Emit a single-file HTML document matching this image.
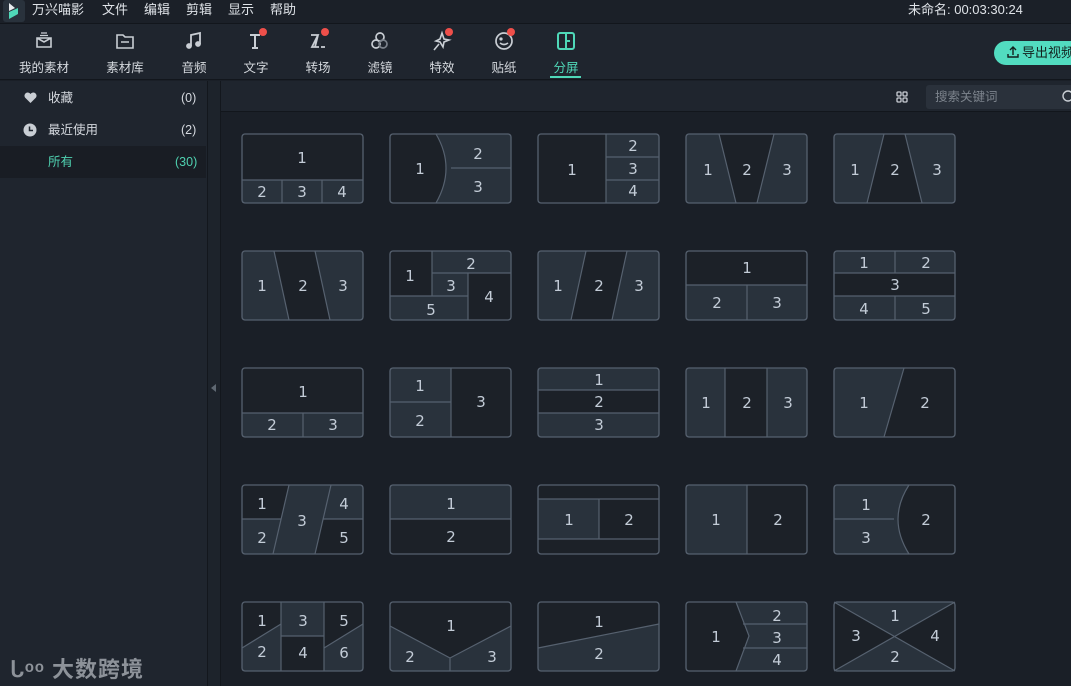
<!DOCTYPE html>
<html><head><meta charset="utf-8"><style>
*{margin:0;padding:0;box-sizing:border-box}
body{width:1071px;height:686px;overflow:hidden;background:#1a1f27;font-family:"Liberation Sans","Noto Sans CJK SC",sans-serif;color:#d4d8de;position:relative}
.abs{position:absolute}
#menu{left:0;top:0;width:1071px;height:24px;background:#1b2028;border-bottom:1px solid #12161c}
#menu span{position:absolute;top:0;line-height:20px;font-size:13px;color:#dfe3e8}
#tool{left:0;top:24px;width:1071px;height:56px;background:#1f252e;border-bottom:1px solid #12161c}
.ti{position:absolute;top:0;width:70px;text-align:center}
.ti svg{position:absolute;left:24px;top:6px}
.ti .lb{position:absolute;top:33px;left:0;width:70px;font-size:12.5px;color:#d5d9de}
.dot{position:absolute;width:8px;height:8px;border-radius:50%;background:#ee4f4a}
#side{left:0;top:81px;width:207px;height:605px;background:#1f252e}
#side .row{position:absolute;left:0;width:206px;height:31px;font-size:12.5px;line-height:31px}
#side .row span{top:0}
#gbar{left:221px;top:81px;width:850px;height:31px;background:#1f252e;border-bottom:1px solid #12161c}
</style></head><body>
<div id="menu" class="abs">
 <div class="abs" style="left:3px;top:0;width:22px;height:22px;background:#29323c;border-radius:3px"></div>
 <svg class="abs" style="left:6px;top:2px" width="16" height="18" viewBox="0 0 16 18"><path d="M3 1 L9 6 L3 9Z" fill="#e8ecef"/><path d="M3 10 L12 6 L12 12 L3 17Z" fill="#4fd8b8"/></svg>
 <span style="left:32px">万兴喵影</span><span style="left:102px">文件</span><span style="left:144px">编辑</span><span style="left:186px">剪辑</span><span style="left:228px">显示</span><span style="left:270px">帮助</span>
 <span style="left:908px">未命名: 00:03:30:24</span>
</div>
<div id="tool" class="abs">
 <div class="ti" style="left:9px"><svg width="22" height="22" viewBox="0 0 22 22" fill="none" stroke="#c9ced4" stroke-width="1.6"><path d="M4 8 H18 V17 H4Z M4 8 L11 12 L18 8"/><path d="M8 3 H14 M7 5.5 H15" stroke-width="1.2"/></svg><div class="lb">我的素材</div></div>
 <div class="ti" style="left:90px"><svg width="22" height="22" viewBox="0 0 22 22" fill="none" stroke="#c9ced4" stroke-width="1.6"><path d="M3 5 H9 L11 7 H19 V18 H3Z M7 12 H15"/></svg><div class="lb">素材库</div></div>
 <div class="ti" style="left:159px"><svg width="22" height="22" viewBox="0 0 22 22" fill="none" stroke="#c9ced4" stroke-width="1.8"><path d="M8 16 V5 L17 3 V14"/><circle cx="6" cy="16" r="2" fill="#c9ced4"/><circle cx="15" cy="14" r="2" fill="#c9ced4"/></svg><div class="lb">音频</div></div>
 <div class="ti" style="left:221px"><svg width="22" height="22" viewBox="0 0 22 22" fill="none" stroke="#c9ced4" stroke-width="2"><path d="M5 5 H15 M10 5 V18 M7 18 H13"/></svg><div class="dot" style="left:38px;top:4px"></div><div class="lb">文字</div></div>
 <div class="ti" style="left:283px"><svg width="22" height="22" viewBox="0 0 22 22" fill="none" stroke="#c9ced4" stroke-width="1.8"><path d="M4 5 H11 L5 17 H12 M11 5 L8 17 M14 17 H18"/></svg><div class="dot" style="left:38px;top:4px"></div><div class="lb">转场</div></div>
 <div class="ti" style="left:345px"><svg width="22" height="22" viewBox="0 0 22 22" fill="none" stroke="#c9ced4" stroke-width="1.7"><circle cx="11" cy="7" r="4"/><circle cx="7" cy="14" r="4"/><circle cx="14" cy="14" r="4" stroke="#7b828b"/></svg><div class="lb">滤镜</div></div>
 <div class="ti" style="left:407px"><svg width="22" height="22" viewBox="0 0 22 22" fill="none" stroke="#c9ced4" stroke-width="1.6"><path d="M11 3 L13 9 L18 10 L13 12 L12 17 L9 12 L5 11 L9 9Z M8 14 L3 20"/></svg><div class="dot" style="left:38px;top:4px"></div><div class="lb">特效</div></div>
 <div class="ti" style="left:469px"><svg width="22" height="22" viewBox="0 0 22 22" fill="none" stroke="#c9ced4" stroke-width="1.7"><circle cx="11" cy="11" r="8"/><path d="M7 13 Q11 16 15 13"/><circle cx="8" cy="9" r=".8" fill="#c9ced4"/></svg><div class="dot" style="left:38px;top:4px"></div><div class="lb">贴纸</div></div>
 <div class="ti" style="left:531px"><svg width="22" height="22" viewBox="0 0 22 22" fill="none" stroke="#4fd8b8" stroke-width="2"><rect x="3" y="3" width="16" height="16" rx="2"/><path d="M11 3 V19 M11 11 H15"/></svg><div class="lb" style="color:#4fd8b8">分屏</div></div>
 <div class="abs" style="left:550px;top:52px;width:31px;height:2px;background:#4fd8b8"></div>
 <div class="abs" style="left:994px;top:17px;width:90px;height:24px;border-radius:12px;background:#52dcc0;color:#13201d;font-size:13px;line-height:24px;padding-left:28px">导出视频</div>
 <svg class="abs" style="left:1006px;top:21px" width="14" height="14" viewBox="0 0 14 14" fill="none" stroke="#13201d" stroke-width="1.4"><path d="M7 10 V2 M4 5 L7 2 L10 5 M2 9 V12 H12 V9"/></svg>
</div>
<div id="side" class="abs">
 <div class="row" style="top:2px"><svg class="abs" style="left:24px;top:9px" width="13" height="12" viewBox="0 0 13 12"><path d="M6.5 11 L1 5.5 A3 3 0 0 1 6.5 2 A3 3 0 0 1 12 5.5Z" fill="#c9ced4"/></svg><span class="abs" style="left:48px">收藏</span><span class="abs" style="left:181px">(0)</span></div>
 <div class="row" style="top:34px"><svg class="abs" style="left:23px;top:8px" width="14" height="14" viewBox="0 0 14 14"><circle cx="7" cy="7" r="6.5" fill="#c9ced4"/><path d="M6.5 3.5 V7.5 H10" stroke="#1f252e" stroke-width="1.5" fill="none"/></svg><span class="abs" style="left:48px">最近使用</span><span class="abs" style="left:181px">(2)</span></div>
 <div class="row" style="top:65px;background:#191d24;height:32px;line-height:32px;color:#4fd1b0"><span class="abs" style="left:48px">所有</span><span class="abs" style="left:175px">(30)</span></div>
</div>
<div class="abs" style="left:207px;top:81px;width:1px;height:605px;background:#13171d"></div>
<div class="abs" style="left:208px;top:81px;width:13px;height:605px;background:#1d232b"></div>
<div class="abs" style="left:220px;top:81px;width:1px;height:605px;background:#13171d"></div>
<svg class="abs" style="left:211px;top:384px" width="6" height="8"><path d="M5 0 V8 L0 4Z" fill="#5f6872"/></svg>
<div id="gbar" class="abs">
 <svg class="abs" style="left:675px;top:10px" width="12" height="12" fill="none" stroke="#c9ced4" stroke-width="1.3"><rect x="1" y="1" width="4" height="4" rx="1"/><rect x="7" y="1" width="4" height="4" rx="1"/><rect x="1" y="7" width="4" height="4" rx="1"/><rect x="7" y="7" width="4" height="4" rx="1"/></svg>
 <div class="abs" style="left:705px;top:4px;width:150px;height:24px;background:#2a313b;border-radius:3px;color:#7d848d;font-size:12.5px;line-height:24px;padding-left:9px">搜索关键词</div>
 <svg class="abs" style="left:841px;top:9px" width="12" height="12" fill="none" stroke="#c9ced4" stroke-width="1.4"><circle cx="6" cy="6" r="5"/></svg>
</div>
<div class="abs" style="left:10px;top:652px;font-size:22px;font-weight:bold;color:#8d9299;letter-spacing:1px">ᒐᵒᵒ 大数跨境</div>

<svg class="abs" style="left:0;top:0" width="1071" height="686" font-family="DejaVu Sans, Liberation Sans, sans-serif" font-size="15" fill="#c3ccd7" text-anchor="middle">
<defs><style>.D{fill:#1c2128}.L{fill:#29323c}.s{stroke:#56616f;stroke-width:1.2;fill:none}.o{fill:none;stroke:#56616f;stroke-width:1.3}text{fill:#c3ccd7}</style></defs>
<g transform="translate(242,134)"><rect class="D" width="121" height="69" rx="3"/><rect class="L" y="46" width="121" height="23"/><path class="s" d="M0 46H121M40 46V69M80 46V69"/><rect class="o" width="121" height="69" rx="3"/><text x="60" y="29">1</text><text x="20" y="63">2</text><text x="60" y="63">3</text><text x="100" y="63">4</text></g>
<g transform="translate(390,134)"><rect class="L" width="121" height="69" rx="3"/><path class="D" d="M0 0H46Q66 34 46 69H0Z"/><path class="s" d="M46 0Q66 34 46 69M61 34H121"/><rect class="o" width="121" height="69" rx="3"/><text x="30" y="40">1</text><text x="88" y="25">2</text><text x="88" y="58">3</text></g>
<g transform="translate(538,134)"><rect class="L" width="121" height="69" rx="3"/><rect class="D" width="68" height="69"/><path class="s" d="M68 0V69M68 23H121M68 46H121"/><rect class="o" width="121" height="69" rx="3"/><text x="34" y="41">1</text><text x="95" y="17">2</text><text x="95" y="40">3</text><text x="95" y="62">4</text></g>
<g transform="translate(686,134)"><rect class="L" width="121" height="69" rx="3"/><path class="D" d="M33 0H88L71 69H50Z"/><path class="s" d="M33 0L50 69M88 0L71 69"/><rect class="o" width="121" height="69" rx="3"/><text x="22" y="41">1</text><text x="61" y="41">2</text><text x="101" y="41">3</text></g>
<g transform="translate(834,134)"><rect class="L" width="121" height="69" rx="3"/><path class="D" d="M50 0H71L88 69H33Z"/><path class="s" d="M50 0L33 69M71 0L88 69"/><rect class="o" width="121" height="69" rx="3"/><text x="21" y="41">1</text><text x="61" y="41">2</text><text x="103" y="41">3</text></g>
<g transform="translate(242,251)"><rect class="L" width="121" height="69" rx="3"/><path class="D" d="M32 0H73L88 69H47Z"/><path class="s" d="M32 0L47 69M73 0L88 69"/><rect class="o" width="121" height="69" rx="3"/><text x="20" y="40">1</text><text x="61" y="40">2</text><text x="101" y="40">3</text></g>
<g transform="translate(390,251)"><rect class="L" width="121" height="69" rx="3"/><rect class="D" width="42" height="45"/><rect class="D" x="78" y="22" width="43" height="47"/><path class="s" d="M42 0V45M42 22H121M78 22V69M0 45H78"/><rect class="o" width="121" height="69" rx="3"/><text x="20" y="30">1</text><text x="81" y="18">2</text><text x="61" y="40">3</text><text x="99" y="51">4</text><text x="41" y="64">5</text></g>
<g transform="translate(538,251)"><rect class="L" width="121" height="69" rx="3"/><path class="D" d="M48 0H89L74 69H33Z"/><path class="s" d="M48 0L33 69M89 0L74 69"/><rect class="o" width="121" height="69" rx="3"/><text x="20" y="40">1</text><text x="61" y="40">2</text><text x="101" y="40">3</text></g>
<g transform="translate(686,251)"><rect class="L" width="121" height="69" rx="3"/><rect class="D" width="121" height="34"/><path class="s" d="M0 34H121M61 34V69"/><rect class="o" width="121" height="69" rx="3"/><text x="61" y="22">1</text><text x="31" y="57">2</text><text x="91" y="57">3</text></g>
<g transform="translate(834,251)"><rect class="L" width="121" height="69" rx="3"/><rect class="D" y="22" width="121" height="23"/><path class="s" d="M0 22H121M0 45H121M61 0V22M61 45V69"/><rect class="o" width="121" height="69" rx="3"/><text x="30" y="17">1</text><text x="92" y="17">2</text><text x="61" y="39">3</text><text x="30" y="63">4</text><text x="92" y="63">5</text></g>
<g transform="translate(242,368)"><rect class="D" width="121" height="69" rx="3"/><rect class="L" y="45" width="121" height="24"/><path class="s" d="M0 45H121M61 45V69"/><rect class="o" width="121" height="69" rx="3"/><text x="61" y="29">1</text><text x="30" y="62">2</text><text x="91" y="62">3</text></g>
<g transform="translate(390,368)"><rect class="D" width="121" height="69" rx="3"/><rect class="L" width="61" height="69"/><path class="s" d="M61 0V69M0 34H61"/><rect class="o" width="121" height="69" rx="3"/><text x="30" y="23">1</text><text x="30" y="58">2</text><text x="91" y="39">3</text></g>
<g transform="translate(538,368)"><rect class="L" width="121" height="69" rx="3"/><rect class="D" y="22" width="121" height="23"/><path class="s" d="M0 22H121M0 45H121"/><rect class="o" width="121" height="69" rx="3"/><text x="61" y="17">1</text><text x="61" y="39">2</text><text x="61" y="62">3</text></g>
<g transform="translate(686,368)"><rect class="L" width="121" height="69" rx="3"/><rect class="D" x="39" width="42" height="69"/><path class="s" d="M39 0V69M81 0V69"/><rect class="o" width="121" height="69" rx="3"/><text x="20" y="40">1</text><text x="61" y="40">2</text><text x="102" y="40">3</text></g>
<g transform="translate(834,368)"><rect class="D" width="121" height="69" rx="3"/><path class="L" d="M0 0H70L50 69H0Z"/><path class="s" d="M70 0L50 69"/><rect class="o" width="121" height="69" rx="3"/><text x="30" y="40">1</text><text x="91" y="40">2</text></g>
<g transform="translate(242,485)"><rect class="L" width="121" height="69" rx="3"/><path class="D" d="M0 0H47L39 34H0Z"/><path class="D" d="M81 34H121V69H73Z"/><path class="s" d="M47 0L31 69M89 0L73 69M0 34H39M81 34H121"/><rect class="o" width="121" height="69" rx="3"/><text x="20" y="24">1</text><text x="20" y="58">2</text><text x="60" y="41">3</text><text x="102" y="24">4</text><text x="102" y="58">5</text></g>
<g transform="translate(390,485)"><rect class="D" width="121" height="69" rx="3"/><rect class="L" width="121" height="34"/><path class="s" d="M0 34H121"/><rect class="o" width="121" height="69" rx="3"/><text x="61" y="24">1</text><text x="61" y="57">2</text></g>
<g transform="translate(538,485)"><rect class="D" width="121" height="69" rx="3"/><rect class="L" y="14" width="61" height="40"/><path class="s" d="M0 14H121M0 54H121M61 14V54"/><rect class="o" width="121" height="69" rx="3"/><text x="31" y="40">1</text><text x="91" y="40">2</text></g>
<g transform="translate(686,485)"><rect class="D" width="121" height="69" rx="3"/><rect class="L" width="61" height="69"/><path class="s" d="M61 0V69"/><rect class="o" width="121" height="69" rx="3"/><text x="30" y="40">1</text><text x="92" y="40">2</text></g>
<g transform="translate(834,485)"><rect class="L" width="121" height="69" rx="3"/><path class="D" d="M75 0H121V69H75Q53 34 75 0Z"/><path class="s" d="M75 0Q53 34 75 69M0 34H60"/><rect class="o" width="121" height="69" rx="3"/><text x="32" y="25">1</text><text x="32" y="58">3</text><text x="92" y="40">2</text></g>
<g transform="translate(242,602)"><rect class="D" width="121" height="69" rx="3"/><path class="L" d="M0 46L39 22V69H0Z"/><rect class="L" x="39" width="43" height="34"/><path class="L" d="M82 46L121 22V69H82Z"/><path class="s" d="M39 0V69M82 0V69M39 34H82M0 46L39 22M82 46L121 22"/><rect class="o" width="121" height="69" rx="3"/><text x="20" y="24">1</text><text x="20" y="55">2</text><text x="61" y="24">3</text><text x="61" y="56">4</text><text x="102" y="24">5</text><text x="102" y="56">6</text></g>
<g transform="translate(390,602)"><rect class="L" width="121" height="69" rx="3"/><path class="D" d="M0 0H121V24L60 56L0 24Z"/><path class="s" d="M0 24L60 56L121 24M60 56V69"/><rect class="o" width="121" height="69" rx="3"/><text x="61" y="29">1</text><text x="20" y="60">2</text><text x="102" y="60">3</text></g>
<g transform="translate(538,602)"><rect class="L" width="121" height="69" rx="3"/><path class="D" d="M0 0H121V22L0 46Z"/><path class="s" d="M0 46L121 22"/><rect class="o" width="121" height="69" rx="3"/><text x="61" y="25">1</text><text x="61" y="57">2</text></g>
<g transform="translate(686,602)"><rect class="L" width="121" height="69" rx="3"/><path class="D" d="M0 0H50L63 34L50 69H0Z"/><path class="s" d="M50 0L63 34L50 69M57 22H121M57 46H121"/><rect class="o" width="121" height="69" rx="3"/><text x="30" y="40">1</text><text x="91" y="19">2</text><text x="91" y="41">3</text><text x="91" y="63">4</text></g>
<g transform="translate(834,602)"><rect class="D" width="121" height="69" rx="3"/><path class="L" d="M0 0H121L60 34Z"/><path class="L" d="M0 69H121L60 34Z"/><path class="s" d="M0 0L121 69M121 0L0 69"/><rect class="o" width="121" height="69" rx="3"/><text x="61" y="19">1</text><text x="61" y="60">2</text><text x="22" y="39">3</text><text x="101" y="39">4</text></g>
</svg>
</body></html>
